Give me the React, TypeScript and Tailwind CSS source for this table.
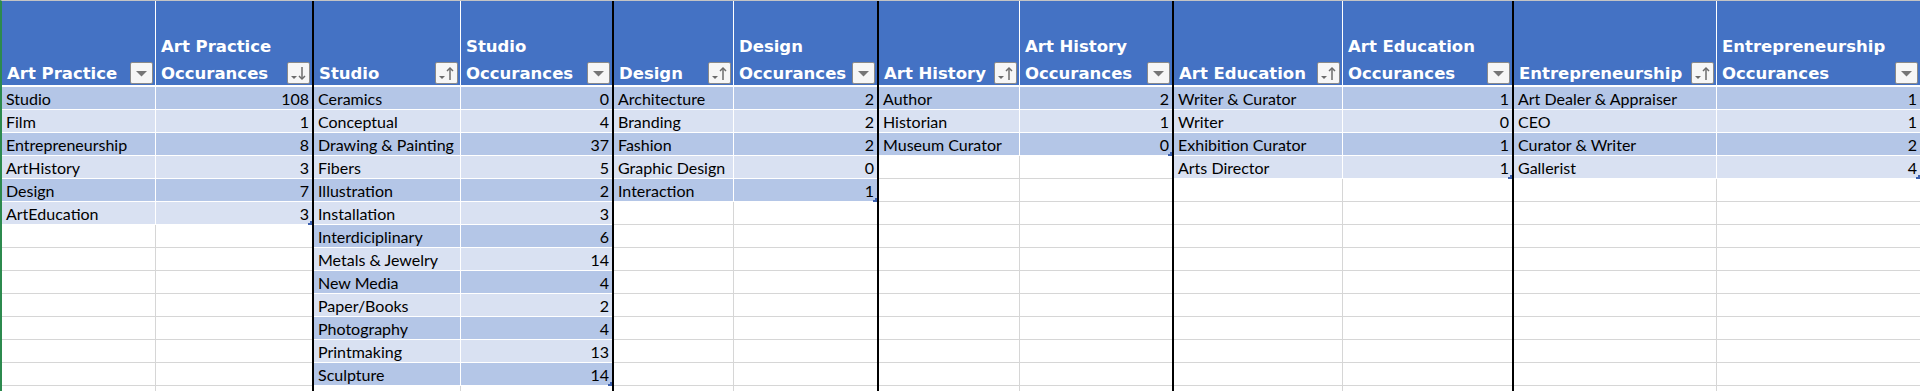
import React from "react";

type Row = [string, number];

type Group = {
  colA: string;
  colB: [string, string];
  iconA: "filter" | "asc";
  iconB: "filter" | "desc";
  widthClass: string;
  colAClass: string;
  last?: boolean;
  rows: Row[];
};

const groups: Group[] = [
  {
    colA: "Art Practice",
    colB: ["Art Practice", "Occurances"],
    iconA: "filter",
    iconB: "desc",
    widthClass: "w-[312px]",
    colAClass: "w-[154px]",
    rows: [
      ["Studio", 108],
      ["Film", 1],
      ["Entrepreneurship", 8],
      ["ArtHistory", 3],
      ["Design", 7],
      ["ArtEducation", 3],
    ],
  },
  {
    colA: "Studio",
    colB: ["Studio", "Occurances"],
    iconA: "asc",
    iconB: "filter",
    widthClass: "w-[300px]",
    colAClass: "w-[147px]",
    rows: [
      ["Ceramics", 0],
      ["Conceptual", 4],
      ["Drawing & Painting", 37],
      ["Fibers", 5],
      ["Illustration", 2],
      ["Installation", 3],
      ["Interdiciplinary", 6],
      ["Metals & Jewelry", 14],
      ["New Media", 4],
      ["Paper/Books", 2],
      ["Photography", 4],
      ["Printmaking", 13],
      ["Sculpture", 14],
    ],
  },
  {
    colA: "Design",
    colB: ["Design", "Occurances"],
    iconA: "asc",
    iconB: "filter",
    widthClass: "w-[265px]",
    colAClass: "w-[120px]",
    rows: [
      ["Architecture", 2],
      ["Branding", 2],
      ["Fashion", 2],
      ["Graphic Design", 0],
      ["Interaction", 1],
    ],
  },
  {
    colA: "Art History",
    colB: ["Art History", "Occurances"],
    iconA: "asc",
    iconB: "filter",
    widthClass: "w-[295px]",
    colAClass: "w-[141px]",
    rows: [
      ["Author", 2],
      ["Historian", 1],
      ["Museum Curator", 0],
    ],
  },
  {
    colA: "Art Education",
    colB: ["Art Education", "Occurances"],
    iconA: "asc",
    iconB: "filter",
    widthClass: "w-[340px]",
    colAClass: "w-[169px]",
    rows: [
      ["Writer & Curator", 1],
      ["Writer", 0],
      ["Exhibition Curator", 1],
      ["Arts Director", 1],
    ],
  },
  {
    colA: "Entrepreneurship",
    colB: ["Entrepreneurship", "Occurances"],
    iconA: "asc",
    iconB: "filter",
    widthClass: "w-[406px]",
    colAClass: "w-[203px]",
    last: true,
    rows: [
      ["Art Dealer & Appraiser", 1],
      ["CEO", 1],
      ["Curator & Writer", 2],
      ["Gallerist", 4],
    ],
  },
];

const ROW_COUNT = 14;

function HeaderButton({ kind }: { kind: "filter" | "asc" | "desc" }) {
  return (
    <div className="mb-[1px] mr-[2px] flex h-[22px] w-[23px] shrink-0 items-center justify-center rounded-[2px] border border-[#8a8a8a] bg-[#f6f6f6]">
      <svg width="21" height="20" viewBox="0 0 21 20">
        {kind === "filter" && <polygon points="5,8 16,8 10.5,13.5" fill="#767676" />}
        {kind === "asc" && (
          <g>
            <polygon points="3,13 9,13 6,16" fill="#6b6b6b" />
            <line x1="14" y1="5" x2="14" y2="17" stroke="#6b6b6b" strokeWidth="1.5" />
            <polyline points="11,8 14,5 17,8" fill="none" stroke="#6b6b6b" strokeWidth="1.5" />
          </g>
        )}
        {kind === "desc" && (
          <g>
            <polygon points="3,13 9,13 6,16" fill="#6b6b6b" />
            <line x1="14" y1="4" x2="14" y2="16" stroke="#6b6b6b" strokeWidth="1.5" />
            <polyline points="11,13 14,16 17,13" fill="none" stroke="#6b6b6b" strokeWidth="1.5" />
          </g>
        )}
      </svg>
    </div>
  );
}

function TableGroup({ group }: { group: Group }) {
  const sideBorder = group.last ? "" : "border-r-2 border-black";

  return (
    <div className={`${group.widthClass} ${sideBorder} flex shrink-0 flex-col`}>
      {/* header, wrapped text sits on the bottom edge like Excel does */}
      <div className="flex h-[86px] shrink-0 border-b-2 border-white bg-[#4472c4] font-['DejaVu_Sans',sans-serif] text-[16.5px] font-bold leading-[27px] text-white">
        <div className={`${group.colAClass} flex shrink-0 items-end justify-between border-r border-white pl-[5px]`}>
          <span className="translate-y-[2px] whitespace-nowrap">{group.colA}</span>
          <HeaderButton kind={group.iconA} />
        </div>
        <div className="flex min-w-0 flex-1 items-end justify-between pl-[5px]">
          <span className="translate-y-[2px] whitespace-nowrap">
            {group.colB[0]}
            <br />
            {group.colB[1]}
          </span>
          <HeaderButton kind={group.iconB} />
        </div>
      </div>

      {Array.from({ length: ROW_COUNT }).map((_, i) => {
        const row = group.rows[i];
        if (!row) {
          return (
            <div key={i} className="flex h-[23px] shrink-0 border-b border-[#d6d6d6] bg-white">
              <div className={`${group.colAClass} shrink-0 border-r border-[#d6d6d6]`} />
              <div className="flex-1" />
            </div>
          );
        }
        const band = i % 2 === 0 ? "bg-[#b4c6e7]" : "bg-[#d9e1f2]";
        const isLast = i === group.rows.length - 1;
        return (
          <div
            key={i}
            className={`flex h-[23px] shrink-0 border-b border-white ${band} text-[16px] leading-[24px] text-black`}
          >
            <div className={`${group.colAClass} shrink-0 truncate border-r border-white pl-[4px]`}>{row[0]}</div>
            <div className="relative flex-1 pr-[3px] text-right">
              {row[1]}
              {isLast && (
                <span className="absolute bottom-[-1px] right-0 h-[4px] w-[4px] border-b-2 border-r-2 border-[#3b5fae]" />
              )}
            </div>
          </div>
        );
      })}
    </div>
  );
}

export default function App() {
  return (
    <div className="flex h-[391px] w-[1920px] overflow-hidden border-l-2 border-t border-l-[#2c8a4e] border-t-[#c4c4c4] bg-white font-['Lato','Noto_Sans',sans-serif]">
      {groups.map((g) => (
        <TableGroup key={g.colA} group={g} />
      ))}
    </div>
  );
}
